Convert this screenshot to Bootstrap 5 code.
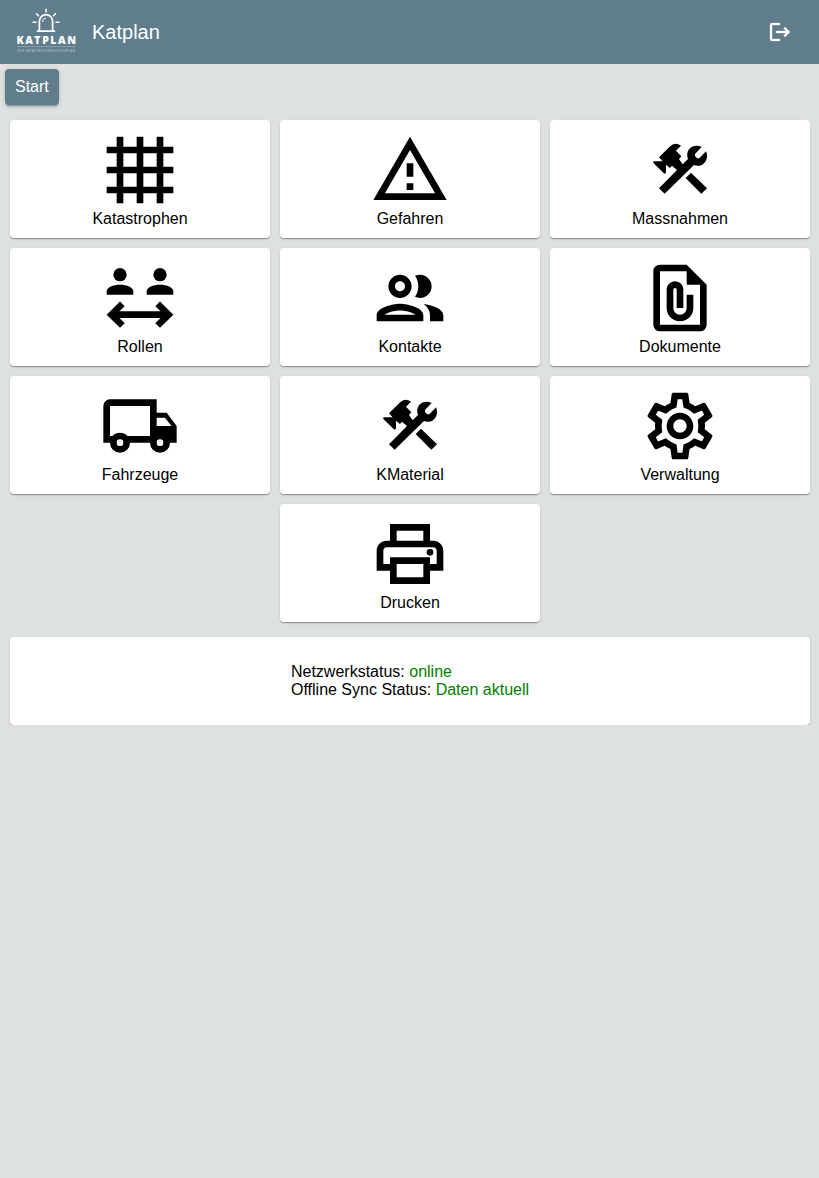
<!DOCTYPE html>
<html lang="de">
<head>
<meta charset="utf-8">
<meta name="viewport" content="width=device-width, initial-scale=1">
<title>Katplan</title>
<link href="https://cdn.jsdelivr.net/npm/bootstrap@5.3.0/dist/css/bootstrap.min.css" rel="stylesheet">
<style>
body{background:#dde1e2;font-family:"Liberation Sans",Arial,sans-serif;font-size:16px;line-height:18px;color:#000}
.topbar{background:#607d8b;height:64px;padding:0 16px}
.topbar .navbar-brand{font-size:20px;line-height:24px;margin:0}
.logout{width:48px;height:48px;margin-right:-1px}
.crumb{margin:5px 5px 0}
.start-btn{--bs-btn-bg:#607d8b;--bs-btn-color:#fff;--bs-btn-border-width:0;--bs-btn-border-radius:4px;--bs-btn-padding-x:10px;--bs-btn-padding-y:0;height:36px;line-height:36px;box-shadow:0 3px 1px -2px rgba(0,0,0,.2),0 2px 2px rgba(0,0,0,.14),0 1px 5px rgba(0,0,0,.12)}
.tiles{gap:10px;padding:15px 9px 0 10px}
.tile,.status{--bs-card-border-width:0;--bs-card-border-radius:4px;color:#000;box-shadow:0 2px 1px -1px rgba(0,0,0,.2),0 1px 1px rgba(0,0,0,.14),0 1px 3px rgba(0,0,0,.12)}
.tile{width:260px;height:118px;padding-top:10px}
.tile,.tile:hover{color:#000}
.tile svg{width:80px;height:80px;fill:#000}
.tile span{line-height:18px}
.status{margin:15px 9px 0 10px;height:88px}
.ok{color:green}
</style>
</head>
<body>
<header class="navbar topbar d-flex flex-nowrap">
  <div class="d-flex align-items-center gap-3">
    <svg width="60" height="60" viewBox="0 0 60 60" fill="none" stroke="#fff">
      <path d="M23.4 28.5v-9.2a6.6 6.6 0 0 1 13.2 0v9.2M20.8 29.2h18.4" stroke-width="1.7"/>
      <path d="M26.6 20a3.6 3.6 0 0 1 3.3-3.9" stroke-width="1"/>
      <path d="M30 6.8v3.6M20.2 11.2l2.6 3M39.8 11.2l-2.6 3M16.5 20.3h4M39.5 20.3h4" stroke-width="1.5"/>
      <path d="M1 44.6h58" stroke-width=".5" opacity=".5"/>
      <text x="0.4" y="42" textLength="59.6" lengthAdjust="spacing" font-family="Open Sans,sans-serif" font-size="10.5" font-weight="800" fill="#fff" stroke="none">KATPLAN</text>
      <text x="1" y="49.6" textLength="58" font-family="Open Sans,sans-serif" font-size="2.9" fill="#fff" stroke="none" opacity=".65">DER KATASTROPHENSCHUTZPLAN</text>
    </svg>
    <span class="navbar-brand text-white p-0">Katplan</span>
  </div>
  <button class="btn logout p-0 border-0 d-flex align-items-center justify-content-center" aria-label="Abmelden">
    <svg width="24" height="24" viewBox="0 0 24 24" fill="#fff" stroke="#fff" stroke-width=".3"><path d="m17 7-1.41 1.41L18.17 11H8v2h10.17l-2.58 2.58L17 17l5-5zM4 5h8V3H4c-1.1 0-2 .9-2 2v14c0 1.1.9 2 2 2h8v-2H4z"/></svg>
  </button>
</header>
<nav class="crumb d-flex"><button class="btn start-btn">Start</button></nav>

<svg class="d-none">
  <symbol id="tools" viewBox="30 30 240 240">
    <path d="M70 124H98L87 112 119 80Q135 64 153 77L138 92 154 109 147 117 158 133 174 117C166 94 180 77 200 77Q208 77 215 81L195 102V108L202 115H208L228 94Q232 102 231 110C229 131 211 142 192 135L104 221 87 205 141 150 126 137 120 144 108 134V157L104 162 70 129Z"/>
    <path d="M183 158 231 205 214 221 167 174Z"/>
  </symbol>
</svg>

<main>
  <div class="tiles d-flex flex-wrap justify-content-center">
    <a class="card tile align-items-center text-decoration-none"><svg viewBox="0 0 24 24"><path d="M5 2h2v3h4V2h2v3h4V2h2v3h3v2h-3v4h3v2h-3v4h3v2h-3v3h-2v-3h-4v3h-2v-3H7v3H5v-3H2v-2h3v-4H2v-2h3V7H2V5h3zm2 5v4h4V7zm6 0v4h4V7zm-6 6v4h4v-4zm6 0v4h4v-4z" fill-rule="evenodd"/></svg><span>Katastrophen</span></a>
    <a class="card tile align-items-center text-decoration-none"><svg viewBox="0 0 24 24"><path d="M12 5.99 19.53 19H4.47zM12 2 1 21h22zm1 14h-2v2h2zm0-6h-2v4h2z" fill-rule="evenodd"/></svg><span>Gefahren</span></a>
    <a class="card tile align-items-center text-decoration-none"><svg><use href="#tools"/></svg><span>Massnahmen</span></a>
    <a class="card tile align-items-center text-decoration-none"><svg viewBox="0 0 24 24"><circle cx="6" cy="5" r="2"/><circle cx="18" cy="5" r="2"/><path d="M2 11v-.9C2 8.8 4 8.05 6 8.05s4 .75 4 2.05v.9zm12 0v-.9c0-1.3 2-2.05 4-2.05s4 .75 4 2.05v.9zM6 13.05 7.4 14.45 5.83 16h12.34L16.6 14.45 18 13.05 22 17l-4 3.95-1.4-1.4L18.17 18H5.83l1.57 1.55L6 20.95 2 17z"/></svg><span>Rollen</span></a>
    <a class="card tile align-items-center text-decoration-none"><svg viewBox="0 0 24 24"><path d="M9 13.75c-2.34 0-7 1.17-7 3.5V19h14v-1.75c0-2.33-4.66-3.5-7-3.5zM4.34 17c.84-.58 2.87-1.25 4.66-1.25s3.82.67 4.66 1.25H4.34zM9 12c1.93 0 3.5-1.57 3.5-3.5S10.93 5 9 5 5.5 6.57 5.5 8.5 7.07 12 9 12zm0-5c.83 0 1.5.67 1.5 1.5S9.83 10 9 10s-1.5-.67-1.5-1.5S8.17 7 9 7zm7.04 6.81c1.16.84 1.96 1.96 1.96 3.44V19h4v-1.75c0-2.02-3.5-3.17-5.96-3.44zM15 12c1.93 0 3.5-1.57 3.5-3.5S16.93 5 15 5c-.54 0-1.04.13-1.5.35.63.89 1 1.98 1 3.15s-.37 2.26-1 3.15c.46.22.96.35 1.5.35z"/></svg><span>Kontakte</span></a>
    <a class="card tile align-items-center text-decoration-none"><svg viewBox="0 0 24 24"><path fill-rule="evenodd" d="M14 2H6a2 2 0 0 0-2 2v16a2 2 0 0 0 2 2h12a2 2 0 0 0 2-2V8zM6 4h8v4h4v12H6z"/><path d="M16 11v4c0 2.21-1.79 4-4 4s-4-1.79-4-4V9.5C8 8.12 9.12 7 10.5 7S13 8.12 13 9.5V15h-2V9.5c0-.28-.22-.5-.5-.5s-.5.22-.5.5V15c0 1.1.9 2 2 2s2-.9 2-2v-4z"/></svg><span>Dokumente</span></a>
    <a class="card tile align-items-center text-decoration-none"><svg viewBox="0 0 24 24"><path fill-rule="evenodd" d="M3 4a2 2 0 0 0-2 2v11h2a3 3 0 0 0 6 0h6a3 3 0 0 0 6 0h2v-5l-3-4h-3V4zm0 2h12v9H8.22a3 3 0 0 0-4.44 0H3zm14 3.5h2.5l1.96 2.5H17zM6 16a1 1 0 1 0 0 2 1 1 0 0 0 0-2zm12 0a1 1 0 1 0 0 2 1 1 0 0 0 0-2z"/></svg><span>Fahrzeuge</span></a>
    <a class="card tile align-items-center text-decoration-none"><svg><use href="#tools"/></svg><span>KMaterial</span></a>
    <a class="card tile align-items-center text-decoration-none"><svg viewBox="0 0 24 24"><path d="M19.43 12.98c.04-.32.07-.64.07-.98 0-.34-.03-.66-.07-.98l2.11-1.65c.19-.15.24-.42.12-.64l-2-3.46c-.09-.16-.26-.25-.44-.25-.06 0-.12.01-.17.03l-2.49 1c-.52-.4-1.08-.73-1.69-.98l-.38-2.65C14.46 2.18 14.25 2 14 2h-4c-.25 0-.46.18-.49.42l-.38 2.65c-.61.25-1.17.59-1.69.98l-2.49-1c-.06-.02-.12-.03-.18-.03-.17 0-.34.09-.43.25l-2 3.46c-.13.22-.07.49.12.64l2.11 1.65c-.04.32-.07.65-.07.98 0 .33.03.66.07.98l-2.11 1.65c-.19.15-.24.42-.12.64l2 3.46c.09.16.26.25.44.25.06 0 .12-.01.17-.03l2.49-1c.52.4 1.08.73 1.69.98l.38 2.65c.03.24.24.42.49.42h4c.25 0 .46-.18.49-.42l.38-2.65c.61-.25 1.17-.59 1.69-.98l2.49 1c.06.02.12.03.18.03.17 0 .34-.09.43-.25l2-3.46c.12-.22.07-.49-.12-.64l-2.11-1.65zm-1.98-1.71c.04.31.05.52.05.73 0 .21-.02.43-.05.73l-.14 1.13.89.7 1.08.84-.7 1.21-1.27-.51-1.04-.42-.9.68c-.43.32-.84.56-1.25.73l-1.06.43-.16 1.13-.2 1.35h-1.4l-.19-1.35-.16-1.13-1.06-.43c-.43-.18-.83-.41-1.23-.71l-.91-.7-1.06.43-1.27.51-.7-1.21 1.08-.84.89-.7-.14-1.13c-.03-.31-.05-.54-.05-.74s.02-.43.05-.73l.14-1.13-.89-.7-1.08-.84.7-1.21 1.27.51 1.04.42.9-.68c.43-.32.84-.56 1.25-.73l1.06-.43.16-1.13.2-1.35h1.39l.19 1.35.16 1.13 1.06.43c.43.18.83.41 1.23.71l.91.7 1.06-.43 1.27-.51.7 1.21-1.07.85-.89.7.14 1.13zM12 8c-2.21 0-4 1.79-4 4s1.79 4 4 4 4-1.79 4-4-1.79-4-4-4zm0 6c-1.1 0-2-.9-2-2s.9-2 2-2 2 .9 2 2-.9 2-2 2z"/></svg><span>Verwaltung</span></a>
    <a class="card tile align-items-center text-decoration-none"><svg viewBox="0 0 24 24"><path fill-rule="evenodd" d="M19 8h-1V3H6v5H5c-1.66 0-3 1.34-3 3v6h4v4h12v-4h4v-6c0-1.66-1.34-3-3-3zM8 5h8v3H8zm8 12v2H8v-4h8zm2-2v-2H6v2H4v-4c0-.55.45-1 1-1h14c.55 0 1 .45 1 1v4z"/><circle cx="18" cy="11.5" r="1"/></svg><span>Drucken</span></a>
  </div>
  <section class="card status align-items-center justify-content-center">
    <div>Netzwerkstatus: <span class="ok">online</span><br>Offline Sync Status: <span class="ok">Daten aktuell</span></div>
  </section>
</main>
<script src="https://cdn.jsdelivr.net/npm/bootstrap@5.3.0/dist/js/bootstrap.bundle.min.js"></script>
</body>
</html>
